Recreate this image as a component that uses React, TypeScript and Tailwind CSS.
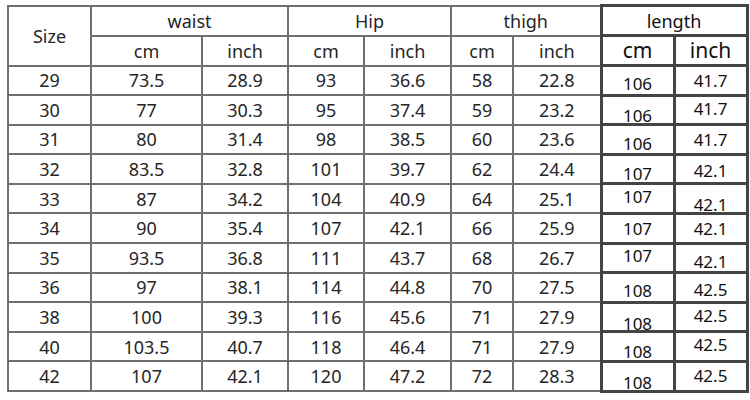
const rows: [string, string, string, string, string, string, string][] = [
  ["29", "73.5", "28.9", "93", "36.6", "58", "22.8"],
  ["30", "77", "30.3", "95", "37.4", "59", "23.2"],
  ["31", "80", "31.4", "98", "38.5", "60", "23.6"],
  ["32", "83.5", "32.8", "101", "39.7", "62", "24.4"],
  ["33", "87", "34.2", "104", "40.9", "64", "25.1"],
  ["34", "90", "35.4", "107", "42.1", "66", "25.9"],
  ["35", "93.5", "36.8", "111", "43.7", "68", "26.7"],
  ["36", "97", "38.1", "114", "44.8", "70", "27.5"],
  ["38", "100", "39.3", "116", "45.6", "71", "27.9"],
  ["40", "103.5", "40.7", "118", "46.4", "71", "27.9"],
  ["42", "107", "42.1", "120", "47.2", "72", "28.3"],
];

// length column values are a bit off-centre in the original, keep that
const length: { cm: string; inch: string; cmOff: string; inOff: string }[] = [
  { cm: "106", inch: "41.7", cmOff: "translate-y-[3px]", inOff: "translate-y-[0px]" },
  { cm: "106", inch: "41.7", cmOff: "translate-y-[6px]", inOff: "translate-y-[-1px]" },
  { cm: "106", inch: "41.7", cmOff: "translate-y-[4px]", inOff: "translate-y-[0px]" },
  { cm: "107", inch: "42.1", cmOff: "translate-y-[4px]", inOff: "translate-y-[1px]" },
  { cm: "107", inch: "42.1", cmOff: "translate-y-[-2px]", inOff: "translate-y-[6px]" },
  { cm: "107", inch: "42.1", cmOff: "translate-y-[0px]", inOff: "translate-y-[0px]" },
  { cm: "107", inch: "42.1", cmOff: "translate-y-[-2px]", inOff: "translate-y-[4px]" },
  { cm: "108", inch: "42.5", cmOff: "translate-y-[3px]", inOff: "translate-y-[2px]" },
  { cm: "108", inch: "42.5", cmOff: "translate-y-[6px]", inOff: "translate-y-[-2px]" },
  { cm: "108", inch: "42.5", cmOff: "translate-y-[5px]", inOff: "translate-y-[-2px]" },
  { cm: "108", inch: "42.5", cmOff: "translate-y-[6px]", inOff: "translate-y-[-1px]" },
];

const cell = "border-2 border-[#6f6f6f] text-center align-middle p-0";
const lenCell = "border-[3px] border-[#444] text-center align-middle p-0";

export default function App() {
  return (
    <div className="w-[750px] h-[400px] bg-white pt-[4px] pl-[7px] font-['Noto_Sans','Open_Sans',sans-serif] text-[#262626] text-[18px] leading-none">
      <table className="border-collapse table-fixed w-[739px]">
        <colgroup>
          <col className="w-[83px]" />
          <col className="w-[111px]" />
          <col className="w-[86px]" />
          <col className="w-[76px]" />
          <col className="w-[87px]" />
          <col className="w-[62px]" />
          <col className="w-[88px]" />
          <col className="w-[73px]" />
          <col className="w-[73px]" />
        </colgroup>
        <thead>
          <tr className="h-[30px]">
            <th rowSpan={2} className={`${cell} font-normal`}>Size</th>
            <th colSpan={2} className={`${cell} font-normal`}>waist</th>
            <th colSpan={2} className={`${cell} font-normal`}>Hip</th>
            <th colSpan={2} className={`${cell} font-normal`}>thigh</th>
            <th colSpan={2} className={`${lenCell} font-normal text-[#111]`}>length</th>
          </tr>
          <tr className="h-[30px]">
            <th className={`${cell} font-normal`}>cm</th>
            <th className={`${cell} font-normal`}>inch</th>
            <th className={`${cell} font-normal`}>cm</th>
            <th className={`${cell} font-normal`}>inch</th>
            <th className={`${cell} font-normal`}>cm</th>
            <th className={`${cell} font-normal`}>inch</th>
            <th className={`${lenCell} font-normal text-[21px] text-[#111]`}>cm</th>
            <th className={`${lenCell} font-normal text-[21px] text-[#111]`}>inch</th>
          </tr>
        </thead>
        <tbody>
          {rows.map((r, i) => (
            <tr key={r[0]} className="h-[29.6px]">
              {r.map((v, j) => (
                <td key={j} className={cell}>{v}</td>
              ))}
              <td className={`${lenCell} text-[17px] text-[#111]`}>
                <span className={`inline-block ${length[i].cmOff}`}>{length[i].cm}</span>
              </td>
              <td className={`${lenCell} text-[17px] text-[#111]`}>
                <span className={`inline-block ${length[i].inOff}`}>{length[i].inch}</span>
              </td>
            </tr>
          ))}
        </tbody>
      </table>
    </div>
  );
}
